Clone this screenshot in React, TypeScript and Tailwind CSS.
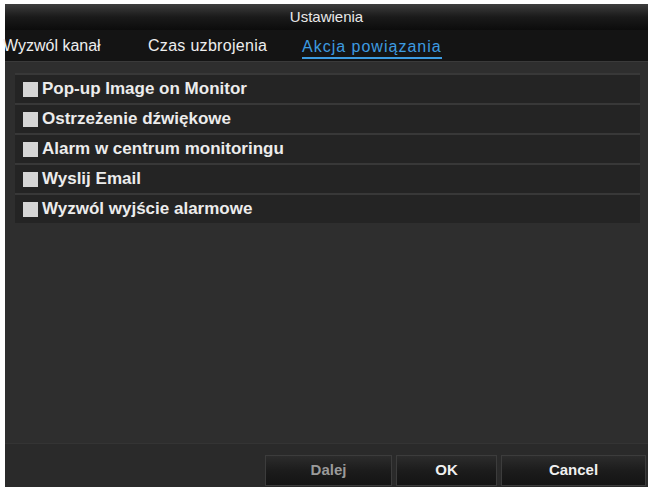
const options = [
  "Pop-up Image on Monitor",
  "Ostrzeżenie dźwiękowe",
  "Alarm w centrum monitoringu",
  "Wyslij Email",
  "Wyzwól wyjście alarmowe",
];

function Button({ label, dim, w }: { label: string; dim?: boolean; w: string }) {
  return (
    <button
      className={`${w} h-[31px] border border-[#3c3c3c] bg-gradient-to-b from-[#2c2c2c] via-[#1c1c1c] to-[#141414] text-[15px] font-bold ${
        dim ? "text-[#9a9a9a]" : "text-[#f0f0f0]"
      }`}
    >
      {label}
    </button>
  );
}

export default function App() {
  return (
    <div
      className="w-[648px] h-[487px] bg-white pl-[5px] pt-[4px] overflow-hidden"
      style={{ fontFamily: '"Liberation Sans", Arial, sans-serif' }}
    >
      <div className="flex flex-col h-full bg-[#2e2e2e]">
        <div className="h-[26px] flex items-center justify-center bg-gradient-to-b from-[#3e3e3e] via-[#1a1a1a] to-[#0c0c0c] text-[#e8e8e8] text-[15px]">
          Ustawienia
        </div>
        <div className="h-[32px] flex items-center bg-[#141414] text-[16px] text-[#eeeeee] border-b border-[#3a3a3a]">
          <span className="w-[145px] shrink-0 -ml-[2px]">Wyzwól kanał</span>
          <span className="w-[154px] shrink-0 tracking-[0.3px]">Czas uzbrojenia</span>
          <span className="text-[#3d9be0] border-b-2 border-[#3d9be0] leading-[20px] mt-[5px] tracking-[1px]">
            Akcja powiązania
          </span>
        </div>
        <div className="flex-1 flex flex-col pt-[11px] pl-[10px] pr-[8px]">
          {options.map((o) => (
            <div
              key={o}
              className="h-[30px] flex items-center bg-[#242424] border-t-2 border-[#383838] pl-[8px] text-[17px] font-bold text-[#ececec]"
            >
              <span className="w-[15px] h-[15px] bg-[#d6d6d6] mr-[4px] shrink-0" />
              {o}
            </div>
          ))}
        </div>
        <div className="h-[44px] bg-[#2a2a2a] border-t border-[#343434] flex items-end justify-end gap-[4px] pr-[2px] pb-[1px]">
          <Button label="Dalej" dim w="w-[127px]" />
          <Button label="OK" w="w-[101px]" />
          <Button label="Cancel" w="w-[145px]" />
        </div>
      </div>
    </div>
  );
}
